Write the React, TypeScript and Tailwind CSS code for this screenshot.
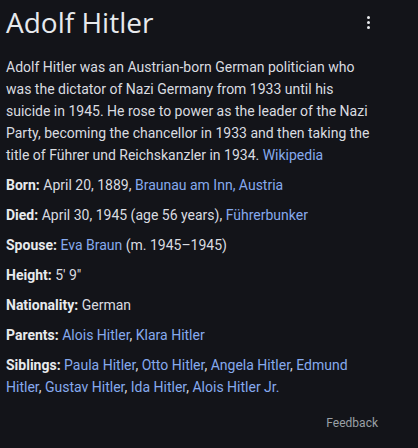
const links = "text-[#86aaee]";

const Row = ({ label, children }: { label: string; children: React.ReactNode }) => (
  <div className="text-[14px] leading-[22px] text-[#dadce0]">
    <span className="font-bold text-[#e8eaed]">{label}: </span>
    {children}
  </div>
);

export default function App() {
  return (
    <div
      className="w-[418px] h-[448px] bg-[#131419] overflow-hidden"
      style={{ fontFamily: "Roboto, Arial, sans-serif" }}
    >
      <div className="flex items-center justify-between pl-[6px] pr-[48px] pt-[4px] h-[40px]">
        <h1
          className="text-[28px] leading-[36px] text-[#e8eaed]"
          style={{ fontFamily: "'Open Sans', Roboto, sans-serif" }}
        >
          Adolf Hitler
        </h1>
        <div className="flex flex-col gap-[2px] items-center">
          <span className="w-[3px] h-[3px] rounded-full bg-[#e8eaed]" />
          <span className="w-[3px] h-[3px] rounded-full bg-[#e8eaed]" />
          <span className="w-[3px] h-[3px] rounded-full bg-[#e8eaed]" />
        </div>
      </div>

      <p className="mt-[16px] pl-[6px] w-[378px] text-[14px] leading-[22px] text-[#dadce0]">
        Adolf Hitler was an Austrian-born German politician who was the dictator of Nazi Germany from 1933
        until his suicide in 1945. He rose to power as the leader of the Nazi Party, becoming the chancellor
        in 1933 and then taking the title of Führer und Reichskanzler in 1934.{" "}
        <a className={links}>Wikipedia</a>
      </p>

      <div className="mt-[8px] pl-[6px] w-[376px] flex flex-col gap-[8px]">
        <Row label="Born">
          April 20, 1889, <a className={links}>Braunau am Inn, Austria</a>
        </Row>
        <Row label="Died">
          April 30, 1945 (age 56 years), <a className={links}>Führerbunker</a>
        </Row>
        <Row label="Spouse">
          <a className={links}>Eva Braun</a> (m. 1945–1945)
        </Row>
        <Row label="Height">5′ 9″</Row>
        <Row label="Nationality">German</Row>
        <Row label="Parents">
          <a className={links}>Alois Hitler</a>, <a className={links}>Klara Hitler</a>
        </Row>
        <Row label="Siblings">
          <a className={links}>Paula Hitler</a>, <a className={links}>Otto Hitler</a>,{" "}
          <a className={links}>Angela Hitler</a>, <a className={links}>Edmund Hitler</a>,{" "}
          <a className={links}>Gustav Hitler</a>, <a className={links}>Ida Hitler</a>,{" "}
          <a className={links}>Alois Hitler Jr.</a>
        </Row>
      </div>

      <div className="flex justify-end pr-[40px] mt-[17px]">
        <span className="text-[12px] leading-[16px] text-[#9aa0a6]">Feedback</span>
      </div>
    </div>
  );
}
